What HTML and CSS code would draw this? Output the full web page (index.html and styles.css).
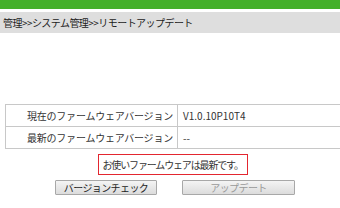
FILE: index.html
```html
<!DOCTYPE html>
<html lang="ja">

<head>
    <meta charset="UTF-8">
    <title>リモートアップデート</title>
    <link rel="stylesheet" href="styles.css">
</head>

<body>

    <div class="topbar"></div>
    <div class="crumb">管理&gt;&gt;システム管理&gt;&gt;リモートアップデート</div>

    <div class="content">
        <table class="info">
            <tr>
                <td class="label">現在のファームウェアバージョン</td>
                <td class="value">V1.0.10P10T4</td>
            </tr>
            <tr>
                <td class="label">最新のファームウェアバージョン</td>
                <td class="value">--</td>
            </tr>
        </table>

        <div class="status">
            <span class="message">お使いファームウェアは最新です。</span>
        </div>

        <div class="actions">
            <button class="btn btn-check">バージョンチェック</button>
            <button class="btn btn-update" disabled>アップデート</button>
        </div>
    </div>

</body>

</html>
```

FILE: styles.css
```css
* {
    margin: 0;
    padding: 0;
    box-sizing: border-box;
}

html {
    overflow: hidden;
}

body {
    font-family: "Noto Sans CJK JP", "Noto Sans", sans-serif;
    font-size: 10px;
    color: #333;
    background-color: #fff;
}

.topbar {
    height: 9px;
    background-color: #44b02a;
    border-bottom: 3px solid #fff;
    box-sizing: content-box;
}

.crumb {
    height: 21px;
    line-height: 21px;
    padding-left: 3px;
    background-color: #dedede;
    color: #222;
    letter-spacing: -0.55px;
    white-space: nowrap;
}

.content {
    width: 335px;
    margin-left: 5px;
    padding-top: 71px;
}

.info {
    width: 350px;
    border-collapse: collapse;
}

.info td {
    border: 1px solid #c8c8c8;
    height: 22px;
    white-space: nowrap;
}

.info .label {
    width: 172px;
    text-align: right;
    padding-right: 4px;
    letter-spacing: -0.2px;
}

.info .value {
    padding-left: 5px;
}

.status {
    display: flex;
    justify-content: center;
    margin-top: 5px;
}

.message {
    display: block;
    width: 150px;
    height: 21px;
    line-height: 19px;
    padding-left: 4px;
    border: 1px solid #e3262f;
    letter-spacing: -1.15px;
    white-space: nowrap;
}

.actions {
    display: flex;
    justify-content: center;
    gap: 25px;
    margin-top: 5px;
    padding-left: 5px;
}

.btn {
    height: 15px;
    font-family: inherit;
    font-size: 10px;
    line-height: 13px;
    color: #222;
    background: linear-gradient(#f4f4f4, #dcdcdc);
    border: 1px solid #a8a8a8;
    border-radius: 1px;
    letter-spacing: -0.6px;
    white-space: nowrap;
    overflow: hidden;
}

.btn-check {
    width: 102px;
}

.btn-update {
    width: 113px;
    color: #999;
}
```
